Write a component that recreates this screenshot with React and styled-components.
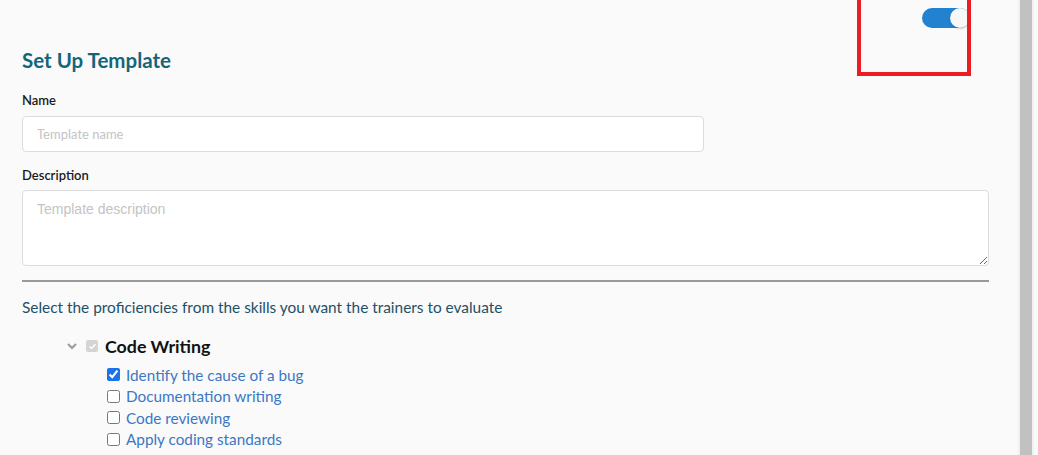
import React from "react";
import styled, { createGlobalStyle } from "styled-components";

const Global = createGlobalStyle`
  html, body { margin: 0; padding: 0; background: #fafafa; }
  body { font-family: Lato, "Open Sans", sans-serif; overflow: hidden; }
  * { box-sizing: border-box; }
`;

const Shell = styled.div`
  display: flex;
  width: 1038px;
  height: 455px;
  background: #fafafa;
`;

const Main = styled.div`
  position: relative;
  flex: 0 0 1017px;
  padding: 8px 29px 0 22px;
`;

const ScrollTrack = styled.div`
  flex: 0 0 16px;
  display: flex;
  justify-content: center;
  background: #f1f1f1;
  padding: 0 2px;
`;

const ScrollThumb = styled.div`
  width: 12px;
  height: 100%;
  background: #c1c1c1;
`;

const ToggleRow = styled.div`
  display: flex;
  justify-content: flex-end;
  padding-right: 19px;
  height: 21px;
`;

const Toggle = styled.div`
  width: 48px;
  height: 20px;
  border-radius: 10px;
  background: #2282d0;
  display: flex;
  align-items: center;
  justify-content: flex-end;
`;

const Knob = styled.div`
  width: 20px;
  height: 20px;
  border-radius: 50%;
  background: #f7f7f7;
  box-shadow: 0 1px 2px rgba(0,0,0,0.2);
`;

const Highlight = styled.div`
  position: absolute;
  left: 857px;
  top: -10px;
  width: 114px;
  height: 86px;
  border: 4px solid #ec1c24;
  pointer-events: none;
`;

const Title = styled.h2`
  margin: 18px 0 0;
  font-size: 20.5px;
  font-weight: 700;
  color: #15657a;
  line-height: 26px;
`;

const Label = styled.label`
  display: block;
  font-size: 13px;
  font-weight: 600;
  color: #1b1b1b;
  line-height: 16px;
  margin-top: ${(p) => p.$mt}px;
`;

const TextInput = styled.input`
  display: block;
  margin-top: 8px;
  width: 682px;
  height: 36px;
  border: 1px solid #dcdcdc;
  border-radius: 4px;
  background: #fff;
  padding: 0 14px;
  font-family: Lato, sans-serif;
  font-size: 13px;
  outline: none;
  &::placeholder { color: #c4c4c4; }
`;

const TextArea = styled.textarea`
  display: block;
  margin-top: 7px;
  width: 967px;
  height: 76px;
  border: 1px solid #dcdcdc;
  border-radius: 4px;
  background: #fff;
  padding: 10px 14px;
  font-family: "Liberation Sans", Arial, sans-serif;
  font-size: 14px;
  outline: none;
  resize: vertical;
  &::placeholder { color: #c4c4c4; }
`;

const Divider = styled.hr`
  margin: 14px 0 0;
  width: 967px;
  border: none;
  border-top: 2px solid #999;
`;

const Intro = styled.p`
  margin: 14px 0 0;
  font-size: 15.4px;
  color: #1e5068;
  line-height: 22px;
`;

const Tree = styled.div`
  margin-top: 15px;
  padding-left: 44px;
`;

const ParentRow = styled.div`
  display: flex;
  align-items: center;
  height: 26px;
`;

const Chevron = styled.svg`
  width: 12px;
  height: 12px;
  margin-right: 8px;
`;

const DisabledBox = styled.span`
  width: 12px;
  height: 12px;
  border-radius: 2px;
  background: #d4d4d4;
  display: inline-flex;
  align-items: center;
  justify-content: center;
  margin-right: 7px;
`;

const ParentLabel = styled.span`
  font-size: 17.8px;
  font-weight: 700;
  color: #111;
`;

const Children = styled.div`
  padding-left: 41px;
  margin-top: 5px;
`;

const ChildRow = styled.label`
  display: flex;
  align-items: center;
  height: 21.5px;
`;

const Box = styled.input`
  margin: 0 6px 0 0;
  width: 13px;
  height: 13px;
  accent-color: #1a73e8;
`;

const ChildText = styled.span`
  font-size: 15.3px;
  color: #3a78c4;
`;

const skills = [
  { label: "Identify the cause of a bug", checked: true },
  { label: "Documentation writing", checked: false },
  { label: "Code reviewing", checked: false },
  { label: "Apply coding standards", checked: false },
];

export default function App() {
  return (
    <Shell>
      <Global />
      <Main>
        <ToggleRow>
          <Toggle>
            <Knob />
          </Toggle>
        </ToggleRow>
        <Highlight />
        <Title>Set Up Template</Title>
        <Label $mt={19}>Name</Label>
        <TextInput placeholder="Template name" />
        <Label $mt={15}>Description</Label>
        <TextArea placeholder="Template description" />
        <Divider />
        <Intro>Select the proficiencies from the skills you want the trainers to evaluate</Intro>
        <Tree>
          <ParentRow>
            <Chevron viewBox="0 0 12 12">
              <path d="M2 4 L6 8 L10 4" fill="none" stroke="#9a9a9a" strokeWidth="2" />
            </Chevron>
            <DisabledBox>
              <svg width="9" height="9" viewBox="0 0 9 9">
                <path d="M1.5 4.5 L3.5 6.5 L7.5 2" fill="none" stroke="#fff" strokeWidth="1.5" />
              </svg>
            </DisabledBox>
            <ParentLabel>Code Writing</ParentLabel>
          </ParentRow>
          <Children>
            {skills.map((s) => (
              <ChildRow key={s.label}>
                <Box type="checkbox" defaultChecked={s.checked} />
                <ChildText>{s.label}</ChildText>
              </ChildRow>
            ))}
          </Children>
        </Tree>
      </Main>
      <ScrollTrack>
        <ScrollThumb />
      </ScrollTrack>
    </Shell>
  );
}
